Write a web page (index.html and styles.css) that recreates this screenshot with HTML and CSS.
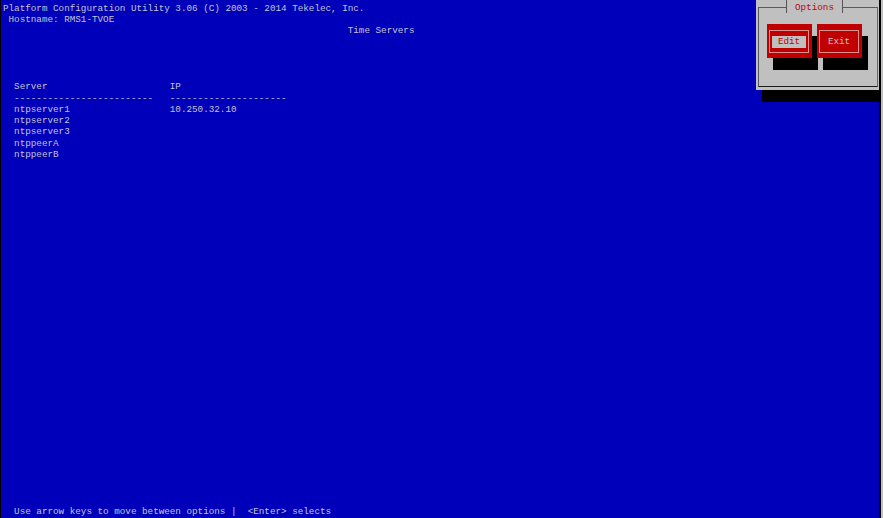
FILE: index.html
```html
<!DOCTYPE html>
<html lang="en">
<head>
  <meta charset="UTF-8" />
  <meta name="viewport" content="width=device-width, initial-scale=1" />
  <title>Platform Configuration Utility - Time Servers</title>
  <link rel="stylesheet" href="styles.css">
</head>
<body>

<div class="screen">
  <div class="line">Platform Configuration Utility 3.06 (C) 2003 - 2014 Tekelec, Inc.</div>
  <div class="line"> Hostname: RMS1-TVOE</div>
  <div class="line">                                                              Time Servers</div>
  <div class="line"> </div>
  <div class="line"> </div>
  <div class="line"> </div>
  <div class="line"> </div>

  <div class="servers">
    <div class="line">  Server                      IP</div>
    <div class="line">  -------------------------   ---------------------</div>
    <div class="line">  ntpserver1                  10.250.32.10</div>
    <div class="line">  ntpserver2</div>
    <div class="line">  ntpserver3</div>
    <div class="line">  ntppeerA</div>
    <div class="line">  ntppeerB</div>
  </div>

  <div class="line footer">  Use arrow keys to move between options |  &lt;Enter&gt; selects</div>

  <div class="dialog">
    <div class="dialog-frame"></div>
    <div class="dialog-title">Options</div>
    <div class="dialog-buttons">
      <div class="btn btn-active"><span class="btn-label">Edit</span></div>
      <div class="btn"><span class="btn-label">Exit</span></div>
    </div>
  </div>
</div>

</body>
</html>
```

FILE: styles.css
```css
* {
  box-sizing: border-box;
}
html, body {
  margin: 0;
  padding: 0;
  background: #c0c0c0;
  overflow: hidden;
}
.screen {
  position: relative;
  width: 881px;
  height: 518px;
  background: #0000bb;
  border-left: 1px solid #000;
  border-right: 2px solid #000;
  padding: 2.5px 0 1px 2px;
  display: flex;
  flex-direction: column;
  overflow: hidden;
  font-family: "Liberation Mono", "DejaVu Sans Mono", monospace;
  font-size: 9.27px;
  line-height: 11.25px;
  color: #c4c4d4;
}
.line {
  white-space: pre;
  height: 11.25px;
}
.footer {
  margin-top: auto;
}

/* options dialog in the top right corner */
.dialog {
  position: absolute;
  left: 755px;
  top: 0;
  width: 124px;
  height: 90px;
  background: #c0c0c0;
  box-shadow: 6px 12px 0 #000;
  padding: 24px 0 0 11px;
}
.dialog-frame {
  position: absolute;
  left: 2px;
  top: 7px;
  right: 2px;
  bottom: 3px;
  border-top: 1px solid #5a5a5a;
  border-left: 1px solid #5a5a66;
  border-right: 1px solid #8a6236;
  border-bottom: 1px solid #1a1a1a;
}
.dialog-title {
  position: absolute;
  left: 30px;
  top: 0;
  width: 57px;
  height: 13px;
  background: #c0c0c0;
  border-left: 1px solid #555;
  border-right: 1px solid #555;
  color: #c00000;
  text-align: center;
  line-height: 15px;
}
.dialog-buttons {
  display: flex;
  gap: 5px;
}
.btn {
  width: 45px;
  height: 34px;
  background: #c00000;
  box-shadow: 6px 12px 0 #000;
  padding: 6px 3px 5px 2px;
}
.btn-label {
  display: flex;
  align-items: center;
  justify-content: center;
  height: 100%;
  border: 1px solid #d89090;
  color: #d0c0c0;
}
.btn-active .btn-label {
  color: #c00000;
  background: linear-gradient(#c0c0c0, #c0c0c0) center / 34px 12px no-repeat;
}
```
